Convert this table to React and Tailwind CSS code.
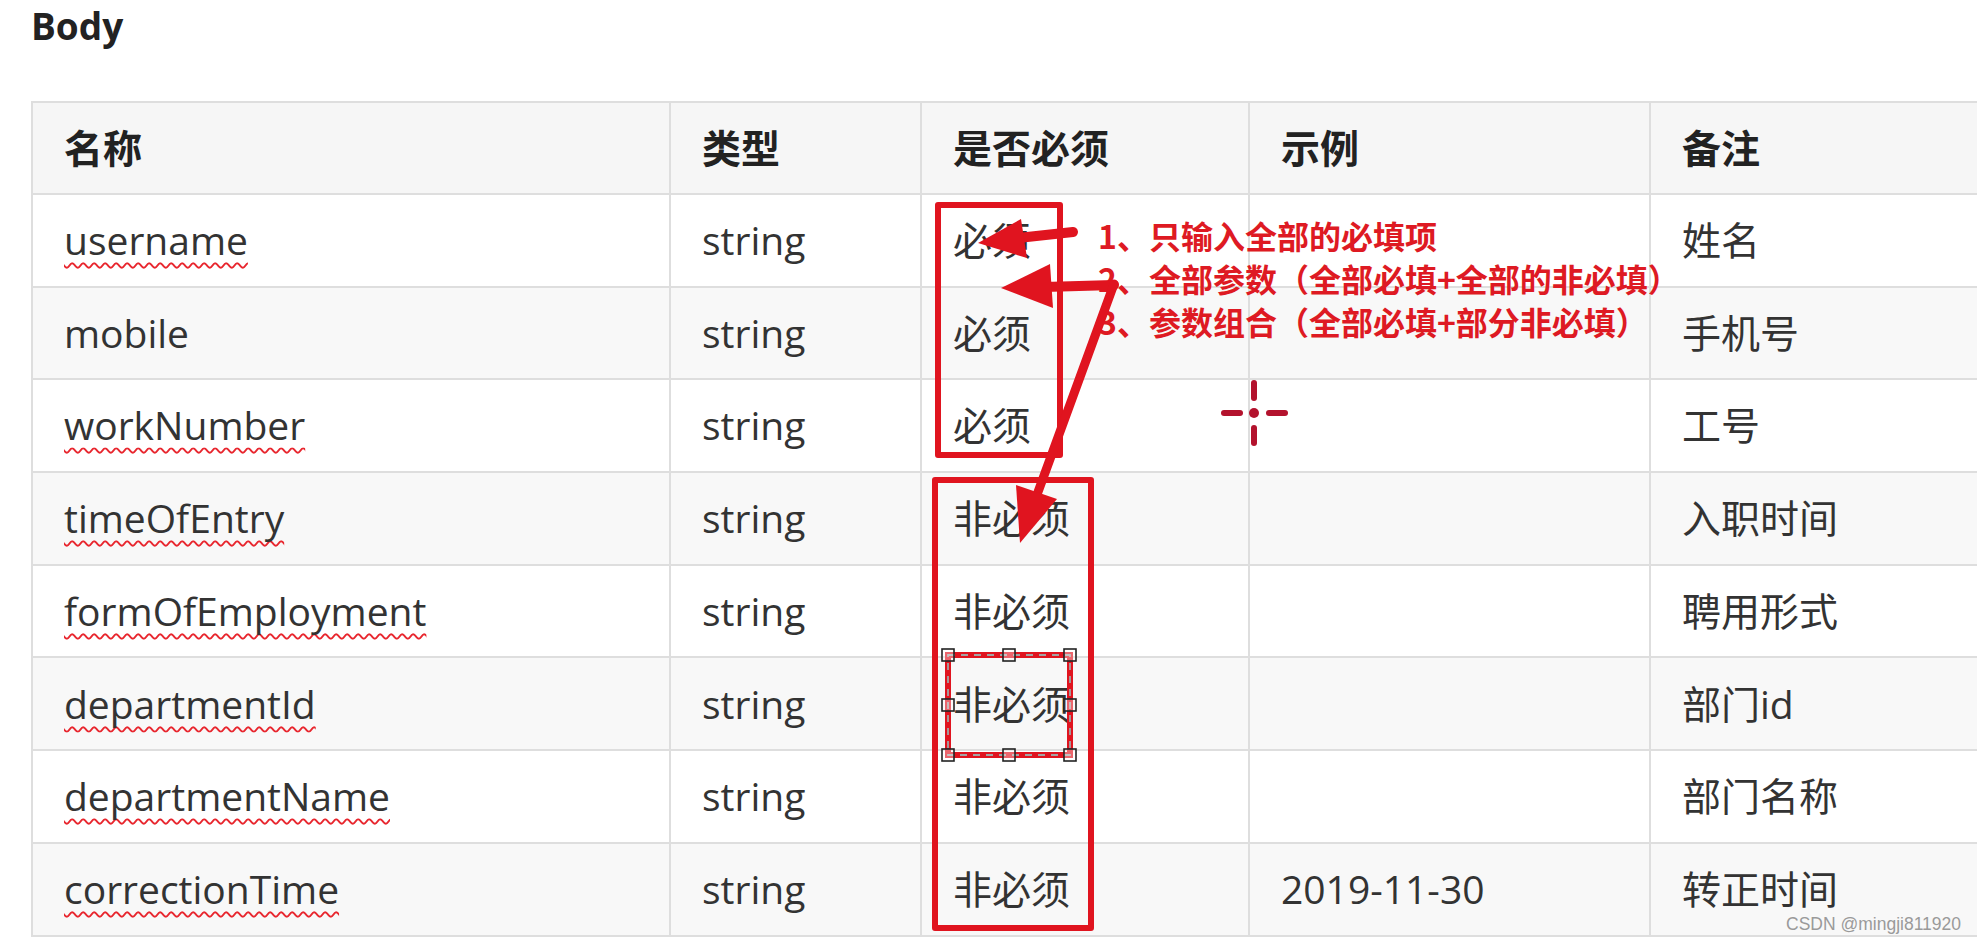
import React from "react";

const rows = [
  { name: "username", type: "string", req: "必须", ex: "", note: "姓名", wavy: true },
  { name: "mobile", type: "string", req: "必须", ex: "", note: "手机号", wavy: false },
  { name: "workNumber", type: "string", req: "必须", ex: "", note: "工号", wavy: true },
  { name: "timeOfEntry", type: "string", req: "非必须", ex: "", note: "入职时间", wavy: true },
  { name: "formOfEmployment", type: "string", req: "非必须", ex: "", note: "聘用形式", wavy: true },
  { name: "departmentId", type: "string", req: "非必须", ex: "", note: "部门id", wavy: true },
  { name: "departmentName", type: "string", req: "非必须", ex: "", note: "部门名称", wavy: true },
  { name: "correctionTime", type: "string", req: "非必须", ex: "2019-11-30", note: "转正时间", wavy: true },
];

const cell = "flex items-center shrink-0 pl-[31px] border-r-2 border-b-2 border-[#dedede] whitespace-nowrap";

function Row({ r, i }) {
  const bg = i % 2 === 1 ? "bg-[#f8f8f8]" : "bg-white";
  return (
    <div className={`flex h-[92.7px] ${bg}`}>
      <div className={`${cell} w-[638px]`}>
        <span
          className={
            r.wavy
              ? "underline decoration-wavy decoration-[#e8262e] decoration-[1.5px] underline-offset-[7px] [text-decoration-skip-ink:none]"
              : ""
          }
        >
          {r.name}
        </span>
      </div>
      <div className={`${cell} w-[251px]`}>{r.type}</div>
      <div className={`${cell} w-[328px]`}>{r.req}</div>
      <div className={`${cell} w-[401px]`}>{r.ex}</div>
      <div className={`${cell} w-[420px]`}>{r.note}</div>
    </div>
  );
}

export default function App() {
  const red = "#e0141f";
  const handles = [
    [948, 655], [1009, 655], [1070, 655],
    [948, 705], [1070, 705],
    [948, 755], [1009, 755], [1070, 755],
  ];
  return (
    <div className="relative w-[1977px] h-[945px] overflow-hidden bg-white font-['Open_Sans','Noto_Sans_CJK_SC',sans-serif] text-[#333333]">
      <div className="pl-[31px] text-[37px] leading-[51px] font-bold text-[#222222]">Body</div>

      <div className="mt-[50px] ml-[31px] border-l-2 border-t-2 border-[#dedede] text-[39px] w-max">
        <div className="flex h-[92px] bg-[#f6f6f6] font-bold text-[#222222]">
          <div className={`${cell} w-[638px]`}>名称</div>
          <div className={`${cell} w-[251px]`}>类型</div>
          <div className={`${cell} w-[328px]`}>是否必须</div>
          <div className={`${cell} w-[401px]`}>示例</div>
          <div className={`${cell} w-[420px]`}>备注</div>
        </div>
        {rows.map((r, i) => (
          <Row key={r.name} r={r} i={i} />
        ))}
      </div>

      {/* red annotation text */}
      <div className="absolute left-[1098px] top-[214px] font-['Noto_Sans_CJK_SC',sans-serif] font-bold text-[32px] leading-[43px] text-[#de1a23] whitespace-nowrap">
        <div>1、只输入全部的必填项</div>
        <div>2、全部参数（全部必填+全部的非必填）</div>
        <div>3、参数组合（全部必填+部分非必填）</div>
      </div>

      {/* annotation drawing overlay */}
      <svg className="absolute left-0 top-0" width="1977" height="945" viewBox="0 0 1977 945">
        {/* boxes */}
        <rect x="938" y="205" width="122" height="250" fill="none" stroke={red} strokeWidth="6" strokeLinejoin="round" />
        <rect x="935" y="480" width="156" height="448" fill="none" stroke={red} strokeWidth="6" strokeLinejoin="round" />

        {/* arrow 1 */}
        <line x1="1073" y1="232" x2="1018" y2="238" stroke={red} strokeWidth="10" strokeLinecap="round" />
        <polygon points="978,243 1021,219 1027,258" fill={red} />

        {/* arrow 2 */}
        <line x1="1114" y1="285" x2="1044" y2="287" stroke={red} strokeWidth="10" strokeLinecap="round" />
        <polygon points="1001,288 1050,264 1053,308" fill={red} />

        {/* arrow 3 */}
        <line x1="1114" y1="284" x2="1038" y2="492" stroke={red} strokeWidth="9" strokeLinecap="round" />
        <polygon points="1020,543 1057,499 1016,485" fill={red} />

        {/* selected dashed box */}
        <rect x="948" y="655" width="122" height="100" fill="none" stroke={red} strokeWidth="6" />
        <rect x="948" y="655" width="122" height="100" fill="none" stroke="#a3a3a3" strokeWidth="1.8" strokeDasharray="7 6" />
        {handles.map(([x, y], k) => (
          <rect key={k} x={x - 6} y={y - 6} width="12" height="12" fill="rgba(255,255,255,0.35)" stroke="#222222" strokeWidth="1.6" />
        ))}

        {/* crosshair */}
        <g stroke="#b3122d" strokeWidth="6" strokeLinecap="round">
          <line x1="1224" y1="413" x2="1240" y2="413" />
          <line x1="1269" y1="413" x2="1285" y2="413" />
          <line x1="1254" y1="383" x2="1254" y2="398" />
          <line x1="1254" y1="428" x2="1254" y2="443" />
        </g>
        <circle cx="1254" cy="413" r="5" fill="#b3122d" />
      </svg>

      {/* watermark */}
      <div className="absolute left-[1786px] top-[914px] font-['Liberation_Sans',sans-serif] text-[17.5px] leading-[20px] text-[#9a9a9a] whitespace-nowrap">
        CSDN @mingji811920
      </div>
    </div>
  );
}
